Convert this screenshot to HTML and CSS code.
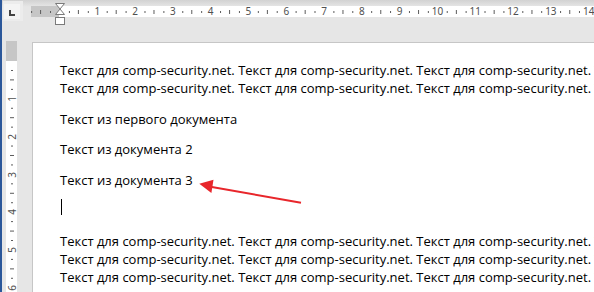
FILE: index.html
```html
<!DOCTYPE html>
<html lang="ru">
<head>
<meta charset="utf-8">
<title>Документ</title>
<link rel="stylesheet" href="styles.css">
</head>
<body>
<div class="app">
  <div class="edge"></div>
  <div class="workspace">
    <header class="ruler-row">
      <div class="tabsel"><span class="tab-l"></span></div>
      <div class="hruler">
        <div class="hr-nums">
          <span>1</span><span>2</span><span>3</span><span>4</span><span>5</span><span>6</span><span>7</span><span>8</span><span>9</span><span>10</span><span>11</span><span>12</span><span>13</span><span>14</span>
        </div>
      </div>
      <svg class="indent-marker" width="10" height="22" viewBox="0 0 10 22">
        <path d="M0.5 0.5 H9.5 L5 6 Z" fill="#fff" stroke="#7a7a7a"/>
        <path d="M5 6 L0.5 11.5 H9.5 Z" fill="#fff" stroke="#7a7a7a"/>
        <rect x="0.5" y="14.5" width="9" height="7" fill="#fff" stroke="#7a7a7a"/>
      </svg>
    </header>
    <div class="doc-row">
      <div class="vruler">
        <div class="vr-nums">
          <span><i>1</i></span><span><i>2</i></span><span><i>3</i></span><span><i>4</i></span><span><i>5</i></span><span><i>6</i></span>
        </div>
      </div>
      <main class="page">
        <p class="para">
          <span class="line">Текст для comp-security.net. Текст для comp-security.net. Текст для comp-security.net. Текст для comp-security.net.</span>
          <span class="line">Текст для comp-security.net. Текст для comp-security.net. Текст для comp-security.net. Текст для comp-security.net.</span>
        </p>
        <p class="para"><span class="line">Текст из первого документа</span></p>
        <p class="para"><span class="line">Текст из документа 2</span></p>
        <p class="para"><span class="line">Текст из документа 3</span></p>
        <p class="para"><span class="line"><span class="caret"></span></span></p>
        <p class="para">
          <span class="line">Текст для comp-security.net. Текст для comp-security.net. Текст для comp-security.net. Текст для comp-security.net.</span>
          <span class="line">Текст для comp-security.net. Текст для comp-security.net. Текст для comp-security.net. Текст для comp-security.net.</span>
          <span class="line">Текст для comp-security.net. Текст для comp-security.net. Текст для comp-security.net. Текст для comp-security.net.</span>
        </p>
        <svg class="arrow" width="300" height="200" viewBox="0 0 300 200">
          <line x1="268" y1="159.7" x2="176" y2="143.5" stroke="#e8262b" stroke-width="2"/>
          <polygon points="166.3,140.7 180.5,136.8 178.4,150" fill="#e8262b"/>
        </svg>
      </main>
    </div>
  </div>
</div>
</body>
</html>
```

FILE: styles.css
```css
html, body {
  margin: 0;
  padding: 0;
  width: 594px;
  height: 292px;
  overflow: hidden;
  background: #e6e6e6;
}

.app {
  display: flex;
  width: 594px;
  height: 292px;
  overflow: hidden;
}

.edge {
  width: 2px;
  flex: none;
  background: #2b579a;
}

.workspace {
  flex: 1;
  display: flex;
  flex-direction: column;
  min-width: 0;
}

.ruler-row {
  position: relative;
  height: 41px;
  flex: none;
  display: flex;
  align-items: flex-start;
  background: linear-gradient(to bottom, #d2d2d2 0, #e4e4e4 6px, #e6e6e6 7px);
}

.tabsel {
  margin: 1px 0 0 1px;
  width: 20px;
  height: 20px;
  flex: none;
  background: #ececec;
  box-sizing: border-box;
  padding: 3px 2px 2px 1px;
}

.tab-l {
  display: block;
  width: 16px;
  height: 15px;
  background: #f4f4f4;
  position: relative;
}

.tab-l::after {
  content: "";
  position: absolute;
  left: 5px;
  top: 6px;
  width: 4px;
  height: 4px;
  border-left: 2px solid #444;
  border-bottom: 2px solid #444;
}

.hruler {
  margin: 6px 0 0 8px;
  height: 11px;
  flex: 1;
  min-width: 0;
  background:
    linear-gradient(to right, #5a5a5a 0 1px, transparent 1px) 0.15px 5px / 18.9px 2px repeat-x,
    linear-gradient(to right, #5a5a5a 0 1px, transparent 1px) 9.1px 4px / 37.8px 4px repeat-x,
    linear-gradient(to right, #c6c6c6 0 28.5px, #ffffff 28.5px);
}

.hr-nums {
  display: flex;
  padding-left: 47.4px;
  height: 11px;
  align-items: center;
}

.hr-nums span {
  flex: none;
  width: 37.8px;
  text-align: center;
  font-family: "Noto Sans", "Open Sans", sans-serif;
  font-size: 10px;
  line-height: 13px;
  color: #505050;
}

.indent-marker {
  position: absolute;
  left: 53px;
  top: 3px;
}

.doc-row {
  flex: 1;
  display: flex;
  align-items: flex-start;
  min-height: 0;
}

.vruler {
  margin-left: 4px;
  width: 11px;
  height: 260px;
  flex: none;
  background:
    linear-gradient(to bottom, #c6c6c6 0 20px, transparent 20px),
    linear-gradient(to bottom, #5a5a5a 0 1px, transparent 1px) 4.5px 10.1px / 2px 18.9px repeat-y,
    linear-gradient(to bottom, #5a5a5a 0 1px, transparent 1px) 3.5px 0.6px / 4px 37.8px repeat-y,
    #ffffff;
}

.vr-nums {
  display: flex;
  flex-direction: column;
  padding-top: 39.1px;
}

.vr-nums span {
  height: 37.8px;
  display: flex;
  align-items: center;
  justify-content: center;
}

.vr-nums i {
  font-style: normal;
  display: block;
  transform: rotate(-90deg);
  font-family: "Noto Sans", "Open Sans", sans-serif;
  font-size: 10px;
  line-height: 12px;
  color: #505050;
}

.page {
  position: relative;
  margin: 1px 0 0 15px;
  width: 900px;
  height: 400px;
  flex: none;
  background: #fff;
  border-top: 1px solid #c6c6c6;
  border-left: 1px solid #c6c6c6;
  padding: 18px 0 0 27px;
  box-sizing: border-box;
  font-family: "Open Sans", "Noto Sans", sans-serif;
  font-size: 13px;
  color: #000;
}

.para {
  margin: 0 0 12.5px;
}

.line {
  display: block;
  height: 18px;
  line-height: 18px;
  white-space: nowrap;
}

.caret {
  display: inline-block;
  width: 1px;
  height: 16px;
  background: #000;
  vertical-align: top;
  margin: -2px 0 0 1px;
}

.arrow {
  position: absolute;
  left: 0;
  top: 0;
  pointer-events: none;
}
```
